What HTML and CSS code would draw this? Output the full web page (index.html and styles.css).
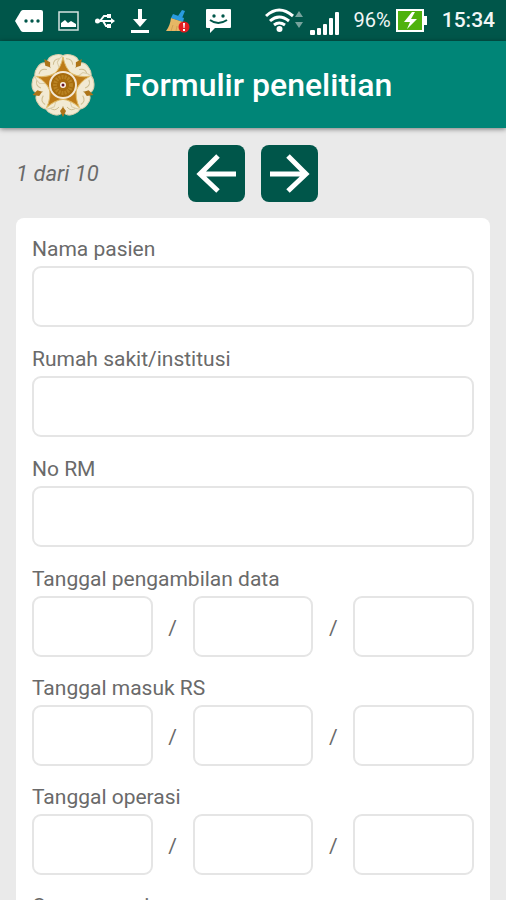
FILE: index.html
```html
<!DOCTYPE html>
<html lang="id">
<head>
<meta charset="utf-8">
<meta name="viewport" content="width=device-width, initial-scale=1">
<title>Formulir penelitian</title>
<link rel="stylesheet" href="styles.css">
</head>
<body>
<div class="statusbar">
  <div class="notifications">
    <svg width="28" height="22" viewBox="0 0 28 22" aria-hidden="true"><path d="M8 0h18q2 0 2 2v18q0 2-2 2H8q-1 0-2-1L0 11l6-10q1-1 2-1z" fill="#fff"/><g fill="#00564a"><circle cx="11" cy="11" r="1.700"/><circle cx="17" cy="11" r="1.700"/><circle cx="23" cy="11" r="1.700"/></g></svg>
    <svg width="22" height="20" viewBox="0 0 22 20" aria-hidden="true"><rect x="1" y="1" width="19" height="18" fill="none" stroke="#d5e3e1" stroke-width="1.500"/><path d="M3 16v-4l4-3 3 3 3-2 5 3v3z" fill="#fff"/></svg>
    <svg width="20" height="14" viewBox="0 0 20 14" fill="none" stroke="#fff" stroke-width="2" aria-hidden="true"><path d="M2 7h15M5 7l4-5h3M8 7l3 5h3"/><circle cx="2.500" cy="7" r="1.500" fill="#fff"/><path d="M16 4l4 3-4 3zM12 0h4v4h-4zM12 10h4v4h-4z" fill="#fff" stroke="none"/></svg>
    <svg width="20" height="26" viewBox="0 0 20 26" fill="#fff" aria-hidden="true"><path d="M8 1h4v10h5l-7 8-7-8h5zM1 22h18v3H1z"/></svg>
    <svg width="26" height="24" viewBox="0 0 26 24" aria-hidden="true"><path d="M13 7l4-6 3 1-3 7z" fill="#299ce0"/><path d="M8 5l11 4-1 4L6 9z" fill="#299ce0"/><path d="M6 9l12 4 1 9H1q4-5 5-13z" fill="#e6b765"/><path d="M8 16l-2 6M12 17l-1 5" stroke="#d0a055"/><circle cx="19" cy="18" r="5.500" fill="#e21c20"/><path d="M18 14h2l-.5 5h-1zM18 20h2v2h-2z" fill="#fff"/></svg>
    <svg class="chat" width="25" height="24" viewBox="0 0 25 24" aria-hidden="true"><path d="M1 0h23q1 0 1 1v17q0 1-1 1H9l-5 5v-5H1q-1 0-1-1V1q0-1 1-1z" fill="#fff"/><g fill="#00564a"><circle cx="8" cy="7" r="1.700"/><circle cx="17" cy="7" r="1.700"/></g><path d="M4 11q8 6 17 0" fill="none" stroke="#00564a" stroke-width="2"/></svg>
  </div>
  <div class="system">
    <svg width="74" height="30" viewBox="0 0 74 30" aria-hidden="true"><g fill="none" stroke="#fff" stroke-width="3"><path d="M1 10q13-12 27 0M5 15q9-8 19 0M9 19q5-4 11 0"/></g><circle cx="14.500" cy="23" r="3" fill="#fff"/><g fill="#77a39d"><path d="M30 11l4-6 4 6zM30 16h8l-4 6z"/></g><g fill="#fff"><rect x="45" y="24" width="5" height="5" rx="1"/><rect x="52" y="22" width="4" height="7" rx="1"/><rect x="58" y="18" width="4" height="11" rx="1"/><rect x="64" y="12" width="4" height="17" rx="1"/><rect x="70" y="6" width="4" height="23" rx="1"/></g></svg>
    <span class="percent">96%</span>
    <svg width="31" height="23" viewBox="0 0 31 23" aria-hidden="true"><rect x="1" y="1" width="26" height="21" fill="#4fb20e" stroke="#fff" stroke-width="2"/><path d="M28 7h3v9h-3z" fill="#fff"/><path d="M16 3L8 13h6l-3 7 10-10h-6l4-7z" fill="#fff"/></svg>
    <time class="clock">15:34</time>
  </div>
</div>
<header class="appbar">
  <svg class="logo" viewBox="-32 -32 64 64" aria-hidden="true">
    <defs>
      <g id="petal"><path d="M0 27Q4 32 11 29 20 26 18 15L8 8H-8L-18 15Q-20 26-11 29-4 32 0 27z" fill="#f2ead3" stroke="#dacda9"/><path d="M0 27v-6M13 23q-5 4-9-1M-13 23q5 4 9-1" fill="none" stroke="#cdbd90"/></g>
      <path id="thorn" d="M-3 26l3 6 3-6-3-4z" fill="#ad7418"/>
      <path id="ray" d="M0-28q2 11 9 17L0-7l-9-4q7-6 9-17z" fill="#bd7b18" stroke="#dfba68"/>
    </defs>
    <use href="#petal"/><use href="#petal" transform="rotate(72)"/><use href="#petal" transform="rotate(144)"/><use href="#petal" transform="rotate(216)"/><use href="#petal" transform="rotate(288)"/>
    <use href="#thorn"/><use href="#thorn" transform="rotate(72)"/><use href="#thorn" transform="rotate(144)"/><use href="#thorn" transform="rotate(216)"/><use href="#thorn" transform="rotate(288)"/>
    <use href="#ray"/><use href="#ray" transform="rotate(72)"/><use href="#ray" transform="rotate(144)"/><use href="#ray" transform="rotate(216)"/><use href="#ray" transform="rotate(288)"/>
    <circle r="13" fill="#a66b0d" stroke="#f3e8d4" stroke-width="2"/>
    <circle r="8" fill="none" stroke="#b98323" stroke-width="4" stroke-dasharray="2 1"/>
    <circle r="3" fill="#fff3e6"/><circle r="1.500" fill="#65152c"/>
  </svg>
  <h1>Formulir penelitian</h1>
</header>
<main>
  <nav class="pager" aria-label="Halaman">
    <span class="progress">1 dari 10</span>
    <div class="steps">
      <button type="button" aria-label="Sebelumnya"><svg viewBox="0 0 57 57"><path d="M30 11L12 29l18 17M12 29h36"/></svg></button>
      <button type="button" aria-label="Berikutnya"><svg viewBox="0 0 57 57"><path d="M27 11l18 18-18 17M45 29H9"/></svg></button>
    </div>
  </nav>
  <form class="card">
    <div class="field"><label for="nama">Nama pasien</label><input id="nama" type="text"></div>
    <div class="field"><label for="rs">Rumah sakit/institusi</label><input id="rs" type="text"></div>
    <div class="field"><label for="rm">No RM</label><input id="rm" type="text"></div>
    <div class="field date" role="group" aria-labelledby="l1"><label id="l1" for="data">Tanggal pengambilan data</label>
      <div class="parts"><input id="data" type="text" inputmode="numeric"><span>/</span><input type="text" inputmode="numeric" aria-labelledby="l1"><span>/</span><input type="text" inputmode="numeric" aria-labelledby="l1"></div></div>
    <div class="field date" role="group" aria-labelledby="l2"><label id="l2" for="masuk">Tanggal masuk RS</label>
      <div class="parts"><input id="masuk" type="text" inputmode="numeric"><span>/</span><input type="text" inputmode="numeric" aria-labelledby="l2"><span>/</span><input type="text" inputmode="numeric" aria-labelledby="l2"></div></div>
    <div class="field date" role="group" aria-labelledby="l3"><label id="l3" for="operasi">Tanggal operasi</label>
      <div class="parts"><input id="operasi" type="text" inputmode="numeric"><span>/</span><input type="text" inputmode="numeric" aria-labelledby="l3"><span>/</span><input type="text" inputmode="numeric" aria-labelledby="l3"></div></div>
    <div class="field"><label for="cara">Cara operasi</label><input id="cara" type="text"></div>
  </form>
</main>
</body>
</html>
```
FILE: styles.css
```css
* { box-sizing: border-box; }
html { scrollbar-width: none; }
body {
  margin: 0;
  background: #eaeaea;
  color: #6a6a6a;
  font: 21px/25px Roboto, sans-serif;
}
.statusbar {
  display: flex;
  align-items: center;
  justify-content: space-between;
  height: 41px;
  padding: 0 11px 0 15px;
  background: #00564a;
  color: #f2f7f6;
}
.notifications, .system { display: flex; align-items: center; }
.notifications { gap: 15px; }
.system { gap: 5px; }
.percent { margin-left: 10px; font-size: 20px; }
.clock { margin-left: 10px; font-size: 21px; font-weight: 500; }
.appbar {
  position: relative;
  display: flex;
  align-items: center;
  gap: 29px;
  height: 87px;
  padding: 0 31px;
  background: #008577;
  color: #fff;
  box-shadow: 0 1px 5px rgba(0, 0, 0, .5);
}
.logo { width: 64px; height: 64px; }
h1 { margin: 0; font-size: 32px; line-height: 40px; font-weight: 500; }
main { padding: 17px 16px 0; }
.pager {
  display: grid;
  grid-template-columns: 1fr auto 1fr;
  align-items: center;
}
.progress { font-size: 22px; font-style: italic; }
.steps { display: flex; gap: 16px; }
.steps button {
  width: 57px;
  height: 57px;
  padding: 0;
  border: 0;
  border-radius: 8px;
  background: #00564a;
}
.steps svg { display: block; fill: none; stroke: #fff; stroke-width: 5px; }
.card {
  margin-top: 16px;
  padding: 19px 16px;
  border-radius: 8px;
  background: #fff;
}
.field { margin-bottom: 20px; }
.date { margin-bottom: 19px; }
.field label { display: block; margin-bottom: 4px; }
input {
  display: block;
  width: 100%;
  min-width: 0;
  height: 61px;
  padding: 0 16px;
  border: 2px solid #e5e5e5;
  border-radius: 9px;
  background: #fff;
  color: inherit;
  font: inherit;
}
.parts {
  display: grid;
  grid-template-columns: 1fr 40px 1fr 40px 1fr;
  align-items: center;
  text-align: center;
}
.parts span { padding-top: 4px; }
```
